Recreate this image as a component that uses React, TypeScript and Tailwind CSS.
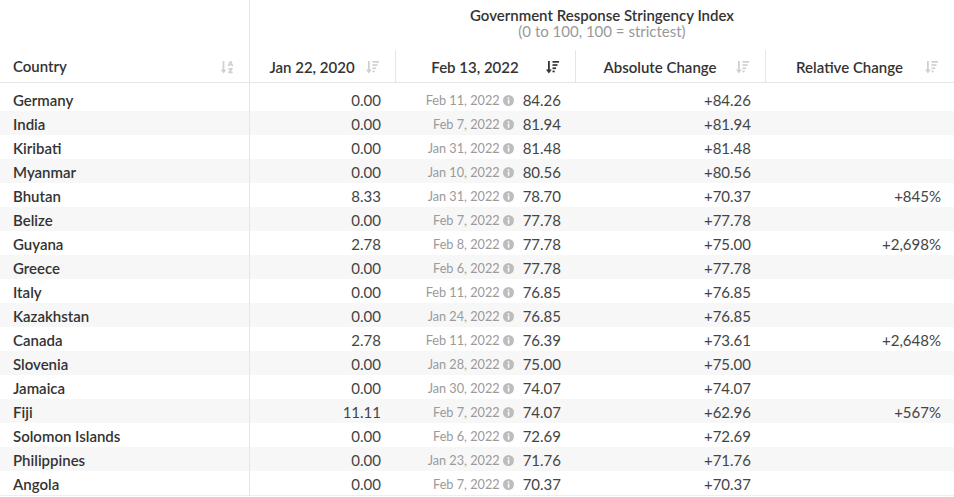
import React from "react";
import { FaSortAlphaDown } from "react-icons/fa";

type Row = { c: string; a: string; d: string; v: string; abs: string; rel?: string };

const rows: Row[] = [
  { c: "Germany", a: "0.00", d: "Feb 11, 2022", v: "84.26", abs: "+84.26" },
  { c: "India", a: "0.00", d: "Feb 7, 2022", v: "81.94", abs: "+81.94" },
  { c: "Kiribati", a: "0.00", d: "Jan 31, 2022", v: "81.48", abs: "+81.48" },
  { c: "Myanmar", a: "0.00", d: "Jan 10, 2022", v: "80.56", abs: "+80.56" },
  { c: "Bhutan", a: "8.33", d: "Jan 31, 2022", v: "78.70", abs: "+70.37", rel: "+845%" },
  { c: "Belize", a: "0.00", d: "Feb 7, 2022", v: "77.78", abs: "+77.78" },
  { c: "Guyana", a: "2.78", d: "Feb 8, 2022", v: "77.78", abs: "+75.00", rel: "+2,698%" },
  { c: "Greece", a: "0.00", d: "Feb 6, 2022", v: "77.78", abs: "+77.78" },
  { c: "Italy", a: "0.00", d: "Feb 11, 2022", v: "76.85", abs: "+76.85" },
  { c: "Kazakhstan", a: "0.00", d: "Jan 24, 2022", v: "76.85", abs: "+76.85" },
  { c: "Canada", a: "2.78", d: "Feb 11, 2022", v: "76.39", abs: "+73.61", rel: "+2,648%" },
  { c: "Slovenia", a: "0.00", d: "Jan 28, 2022", v: "75.00", abs: "+75.00" },
  { c: "Jamaica", a: "0.00", d: "Jan 30, 2022", v: "74.07", abs: "+74.07" },
  { c: "Fiji", a: "11.11", d: "Feb 7, 2022", v: "74.07", abs: "+62.96", rel: "+567%" },
  { c: "Solomon Islands", a: "0.00", d: "Feb 6, 2022", v: "72.69", abs: "+72.69" },
  { c: "Philippines", a: "0.00", d: "Jan 23, 2022", v: "71.76", abs: "+71.76" },
  { c: "Angola", a: "0.00", d: "Feb 7, 2022", v: "70.37", abs: "+70.37" },
];

function SortAmount({ active }: { active?: boolean }) {
  const col = active ? "#333333" : "#d0d0d0";
  return (
    <svg width="13" height="14" viewBox="0 0 13 14" className="shrink-0">
      <rect x="2" y="1" width="1.8" height="10" fill={col} />
      <path d="M0 9.5 L5.8 9.5 L2.9 13.5 Z" fill={col} />
      <rect x="6.5" y="1" width="6.5" height="1.7" fill={col} />
      <rect x="6.5" y="4.2" width="5" height="1.7" fill={col} />
      <rect x="6.5" y="7.4" width="3.6" height="1.7" fill={col} />
      <rect x="6.5" y="10.6" width="2.2" height="1.7" fill={col} />
    </svg>
  );
}

function Info() {
  return (
    <svg width="11" height="11" viewBox="0 0 11 11" className="shrink-0">
      <circle cx="5.5" cy="5.5" r="5.5" fill="#bdbdbd" />
      <rect x="4.8" y="4.6" width="1.5" height="4" fill="#fff" />
      <rect x="4.8" y="2.3" width="1.5" height="1.5" fill="#fff" />
    </svg>
  );
}

function HeadCell({ label, active, border = true }: { label: string; active?: boolean; border?: boolean }) {
  return (
    <div
      className={`flex items-center pl-4 pr-[16px] gap-2 h-full pt-[2px] ${border ? "border-r border-[#e6e6e6]" : ""}`}
    >
      <span className="flex-1 text-center text-[15px] font-semibold text-[#333]">{label}</span>
      <SortAmount active={active} />
    </div>
  );
}

export default function App() {
  return (
    <div
      className="w-[954px] h-[497px] bg-white overflow-hidden text-[#333]"
      style={{ fontFamily: "Lato, 'Noto Sans', sans-serif" }}
    >
      <div className="grid grid-cols-[250px_146px_180px_190px_188px]">
        {/* header row 1 */}
        <div className="h-[49px] border-r border-[#e6e6e6]" />
        <div className="col-span-4 h-[49px] flex flex-col items-center pt-[7px]">
          <div className="text-[15px] leading-[16px] font-semibold text-[#333]">
            Government Response Stringency Index
          </div>
          <div className="text-[15px] leading-[16px] text-[#999]">(0 to 100, 100 = strictest)</div>
        </div>
        {/* header row 2 */}
        <div className="h-[34px] border-b border-r border-[#e6e6e6] flex items-center pl-[13px] pr-[15px] pt-[2px]">
          <span className="flex-1 text-[15px] font-semibold text-[#333]">Country</span>
          <FaSortAlphaDown className="text-[#d0d0d0] w-[14px] h-[14px]" />
        </div>
        <div className="h-[34px] border-b border-[#e6e6e6] pt-px">
          <HeadCell label="Jan 22, 2020" />
        </div>
        <div className="h-[34px] border-b border-[#e6e6e6] pt-px">
          <HeadCell label="Feb 13, 2022" active />
        </div>
        <div className="h-[34px] border-b border-[#e6e6e6] pt-px">
          <HeadCell label="Absolute Change" />
        </div>
        <div className="h-[34px] border-b border-[#e6e6e6] pt-px">
          <HeadCell label="Relative Change" border={false} />
        </div>
        {/* spacer */}
        <div className="h-[4px] border-r border-[#e6e6e6]" />
        <div className="col-span-4 h-[4px]" />
      </div>
      {rows.map((r, i) => (
        <div
          key={r.c}
          className={`grid grid-cols-[250px_146px_180px_190px_188px] h-[24px] items-stretch text-[15px] ${
            i % 2 === 1 ? "bg-[#f7f7f7]" : "bg-white"
          }`}
        >
          <div className="border-r border-[#e6e6e6] pl-[13px] pt-[2px] flex items-center font-semibold text-[#333]">
            {r.c}
          </div>
          <div className="flex items-center justify-end pr-[15px] pt-[2px] text-[#444]">{r.a}</div>
          <div className="flex items-center justify-end pr-[15px] pt-[2px]">
            <span className="text-[12.7px] text-[#9a9a9a]">{r.d}</span>
            <span className="ml-[3px] mr-[9px] flex items-center">
              <Info />
            </span>
            <span className="text-[#444]">{r.v}</span>
          </div>
          <div className="flex items-center justify-end pr-[15px] pt-[2px] text-[#444]">{r.abs}</div>
          <div className="flex items-center justify-end pr-[13px] pt-[2px] text-[#444]">{r.rel ?? ""}</div>
        </div>
      ))}
      <div className="h-px bg-[#eeeeee]" />
    </div>
  );
}
